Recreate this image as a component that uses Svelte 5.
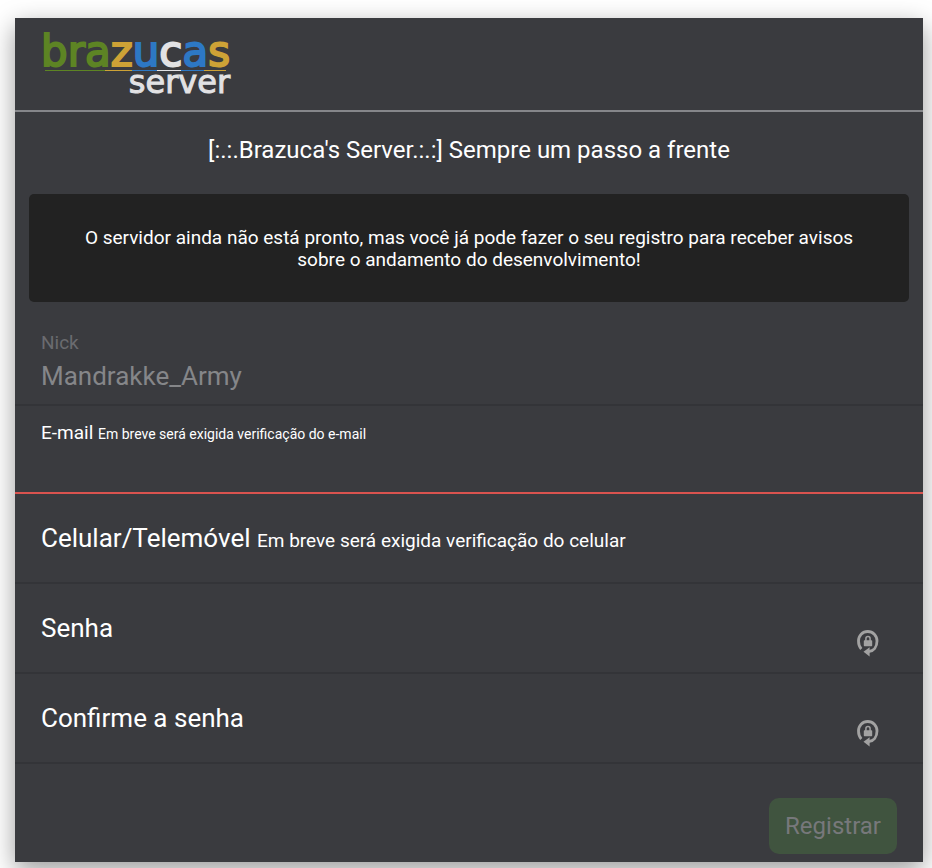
<script>
  let nick = $state('Mandrakke_Army');
  let email = $state('');
  let phone = $state('');
  let password = $state('');
  let confirmation = $state('');
</script>

{#snippet lockIcon()}
  <svg viewBox="0 0 24 28" width="24" height="28" aria-hidden="true">
    <path d="M5.3 20 C3.5 18 2.5 15.3 2.5 12 C2.5 6.5 6.5 2.5 11.7 2.5 C17 2.5 21 6.7 21 12 C21 17.8 17.8 22 12.5 22.7" fill="none" stroke="#a2a2a2" stroke-width="2.8" />
    <path d="M7.5 22.8 L13.6 18.2 L13.6 27.4 Z" fill="#a2a2a2" />
    <rect x="7.8" y="11.3" width="8.4" height="5.9" rx="0.7" fill="#a2a2a2" />
    <path d="M9.9 12 V9.7 A2.1 2.1 0 0 1 14.1 9.7 V12" fill="none" stroke="#a2a2a2" stroke-width="1.5" />
  </svg>
{/snippet}

<main class="card">
  <header>
    <div class="logo">
      <div class="brand"><span class="green">bra</span><span class="gold">z</span><span class="blue">u</span><span class="white">c</span><span class="blue">a</span><span class="gold">s</span></div>
      <div class="rule"></div>
      <div class="server">server</div>
    </div>
  </header>

  <h1>[:.:.Brazuca's Server.:.:] Sempre um passo a frente</h1>

  <p class="notice">
    O servidor ainda não está pronto, mas você já pode fazer o seu registro para receber avisos sobre o andamento do desenvolvimento!
  </p>

  <form onsubmit={(event) => event.preventDefault()}>
    <div class="field floated disabled">
      <label for="nick">Nick</label>
      <input id="nick" type="text" bind:value={nick} disabled />
    </div>
    <div class="field floated invalid">
      <label for="email">E-mail <small>Em breve será exigida verificação do e-mail</small></label>
      <input id="email" type="email" bind:value={email} />
    </div>
    <div class="field resting">
      <label for="phone">Celular/Telemóvel <small>Em breve será exigida verificação do celular</small></label>
      <input id="phone" type="tel" bind:value={phone} />
    </div>
    <div class="field resting">
      <label for="password">Senha</label>
      <input id="password" type="password" bind:value={password} />
      <span class="icon">{@render lockIcon()}</span>
    </div>
    <div class="field resting">
      <label for="confirmation">Confirme a senha</label>
      <input id="confirmation" type="password" bind:value={confirmation} />
      <span class="icon">{@render lockIcon()}</span>
    </div>
    <div class="actions">
      <button type="submit" disabled>Registrar</button>
    </div>
  </form>
</main>

<style>
  :global(body) {
    background: #fff;
  }
  .card {
    display: flow-root;
    margin: 18px 9px 6px 15px;
    background: #3a3b3f;
    color: #fff;
    font-family: Roboto, "Liberation Sans", sans-serif;
    box-shadow: 0 8px 24px rgba(0, 0, 0, 0.4);
  }
  header {
    padding: 16px 26px;
    border-bottom: 2px solid #85868a;
  }
  .logo {
    width: max-content;
    font-family: "DejaVu Sans", sans-serif;
  }
  .brand {
    font-size: 42px;
    line-height: 36px;
    -webkit-text-stroke: 2px currentColor;
  }
  .green { color: #5d8424; }
  .gold { color: #cda236; }
  .blue { color: #2d78c4; }
  .white { color: #e2e2e4; }
  .rule {
    height: 1px;
    margin: 0 4px;
    background: linear-gradient(to right, #5d8424 33%, #cda236 33% 48%, #2d78c4 48% 62%, #e2e2e4 62% 75%, #2d78c4 75% 88%, #cda236 88%);
  }
  .server {
    color: #e2e2e4;
    font-size: 32px;
    line-height: 23px;
    text-align: right;
    -webkit-text-stroke: 1px currentColor;
  }
  h1 {
    margin: 24px 14px 30px;
    font-size: 24px;
    line-height: 28px;
    font-weight: 400;
    text-align: center;
  }
  .notice {
    margin: 0 14px;
    padding: 33px 48px 31px;
    border-radius: 5px;
    background: #222;
    font-size: 19px;
    line-height: 22px;
    text-align: center;
  }
  .field {
    display: grid;
    grid-template-columns: 1fr auto;
    box-sizing: border-box;
    height: 90px;
    padding: 0 26px;
    border-bottom: 2px solid #333438;
  }
  .field input {
    width: 100%;
    min-width: 0;
    box-sizing: border-box;
    padding: 0;
    border: 0;
    outline: 0;
    background: transparent;
    color: inherit;
    font: inherit;
    font-size: 26px;
  }
  .floated {
    grid-template-columns: 1fr;
    grid-template-rows: 26px 40px;
    padding-top: 14px;
    font-size: 19px;
  }
  .floated label {
    line-height: 26px;
  }
  .floated small {
    font-size: 14px;
  }
  .disabled {
    margin-top: 14px;
    color: #6a6b6f;
  }
  .disabled input {
    color: #858689;
  }
  .invalid {
    height: 88px;
    border-bottom-color: #d9534f;
  }
  .resting {
    font-size: 26px;
    line-height: 88px;
  }
  .resting label,
  .resting input {
    grid-area: 1 / 1;
  }
  .resting small {
    font-size: 19px;
  }
  .icon {
    display: flex;
    align-items: flex-end;
    padding: 0 17px 15px 0;
  }
  .actions {
    display: flex;
    justify-content: flex-end;
    padding: 34px 26px 8px;
  }
  button {
    height: 56px;
    padding: 0 16px;
    border: 0;
    border-radius: 10px;
    background: #40543f;
    color: #77787b;
    font: inherit;
    font-size: 24px;
  }
</style>
